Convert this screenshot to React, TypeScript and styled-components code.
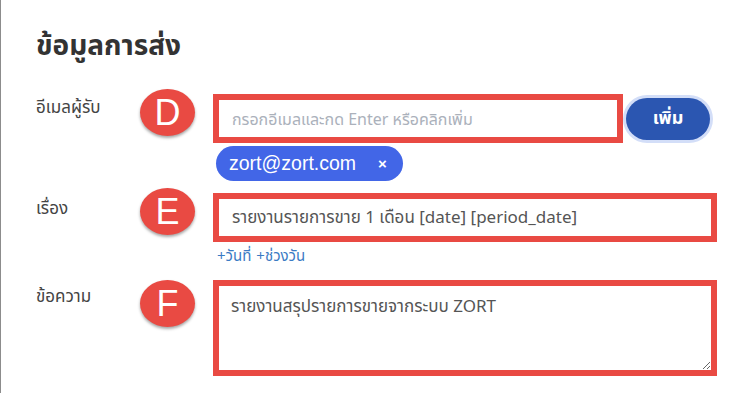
import React from "react";
import styled, { createGlobalStyle } from "styled-components";

const GlobalStyle = createGlobalStyle`
  html, body {
    margin: 0;
    padding: 0;
    background: #ffffff;
  }
  body {
    font-family: "Noto Sans", "Noto Sans Thai", "Liberation Sans", sans-serif;
  }
`;

const Frame = styled.div`
  width: 750px;
  height: 393px;
  box-sizing: border-box;
  border-left: 1px solid #8c8c8c;
  padding: 27px 0 0 35px;
  overflow: hidden;
  background: #fff;
`;

const Title = styled.h2`
  margin: 0;
  font-size: 28px;
  line-height: 34px;
  font-weight: 700;
  color: #333;
`;

const Form = styled.div`
  display: flex;
  flex-direction: column;
`;

const Row = styled.div<{ $top: number }>`
  display: grid;
  grid-template-columns: 104px 55px 1fr;
  margin-top: ${(p) => p.$top}px;
`;

const Label = styled.div<{ $pad: number }>`
  padding-top: ${(p) => p.$pad}px;
  font-size: 17px;
  line-height: 20px;
  color: #444;
`;

const Badge = styled.div`
  width: 55px;
  height: 47px;
  border-radius: 50%;
  background: #e94a43;
  box-shadow: 0 2px 3px rgba(0, 0, 0, 0.35);
  color: #fff;
  display: flex;
  align-items: center;
  justify-content: center;
  font-family: "Liberation Sans", Arial, sans-serif;
  font-size: 36px;
  font-weight: 400;
`;

const Field = styled.div`
  margin-left: 18px;
  display: flex;
  flex-direction: column;
  align-items: flex-start;
`;

const InputLine = styled.div`
  display: flex;
  align-items: center;
  margin-top: 5px;
`;

const TextBox = styled.input<{ $width: number }>`
  box-sizing: border-box;
  width: ${(p) => p.$width}px;
  height: 49px;
  border: 6px solid #e94a43;
  padding: 0 13px;
  font-family: "Noto Sans", "Noto Sans Thai", "Liberation Sans", sans-serif;
  font-size: 17px;
  color: #555;
  background: #fff;
  outline: none;

  &::placeholder {
    color: #abb1bb;
    font-size: 16px;
  }
`;

const AddButton = styled.button`
  margin-left: 3px;
  width: 84px;
  height: 42px;
  border: none;
  border-radius: 21px;
  background: #2b56b1;
  box-shadow: 0 0 0 3px #d3def8;
  color: #fff;
  font-family: "Noto Sans", "Noto Sans Thai", "Liberation Sans", sans-serif;
  font-size: 18px;
  font-weight: 700;
`;

const Chip = styled.div`
  margin: 3px 0 0 3px;
  height: 35px;
  display: flex;
  align-items: center;
  gap: 22px;
  padding: 0 16px 0 13px;
  border-radius: 18px;
  background: #4266e7;
  color: #fff;
  font-family: "Liberation Sans", Arial, sans-serif;
  font-size: 19.5px;
`;

const ChipClose = styled.span`
  font-size: 15px;
  font-weight: 700;
`;

const Links = styled.div`
  margin-top: 4px;
  margin-left: 4px;
  display: flex;
  gap: 5px;
  font-size: 15px;
  line-height: 18px;
  color: #3b7bc4;
`;

const MessageBox = styled.textarea`
  display: block;
  box-sizing: border-box;
  width: 504px;
  height: 96px;
  border: 6px solid #e94a43;
  padding: 8px 12px;
  font-family: "Noto Sans", "Noto Sans Thai", "Liberation Sans", sans-serif;
  font-size: 17px;
  color: #555;
  background: #fff;
  outline: none;
`;

const App: React.FC = () => {
  return (
    <>
      <GlobalStyle />
      <Frame>
        <Title>ข้อมูลการส่ง</Title>

        <Form>
          {/* email */}
          <Row $top={28}>
            <Label $pad={8}>อีเมลผู้รับ</Label>
            <Badge>D</Badge>
            <Field>
              <InputLine>
                <TextBox
                  $width={410}
                  placeholder="กรอกอีเมลและกด Enter หรือคลิกเพิ่ม"
                />
                <AddButton>เพิ่ม</AddButton>
              </InputLine>
              <Chip>
                zort@zort.com <ChipClose>×</ChipClose>
              </Chip>
            </Field>
          </Row>

          {/* subject */}
          <Row $top={7}>
            <Label $pad={10}>เรื่อง</Label>
            <Badge>E</Badge>
            <Field>
              <InputLine>
                <TextBox
                  $width={504}
                  readOnly
                  defaultValue="รายงานรายการขาย 1 เดือน [date] [period_date]"
                />
              </InputLine>
              <Links>
                <span>+วันที่</span>
                <span>+ช่วงวัน</span>
              </Links>
            </Field>
          </Row>

          {/* message */}
          <Row $top={16}>
            <Label $pad={6}>ข้อความ</Label>
            <Badge>F</Badge>
            <Field>
              <MessageBox
                readOnly
                defaultValue="รายงานสรุปรายการขายจากระบบ ZORT"
              />
            </Field>
          </Row>
        </Form>
      </Frame>
    </>
  );
};

export default App;
